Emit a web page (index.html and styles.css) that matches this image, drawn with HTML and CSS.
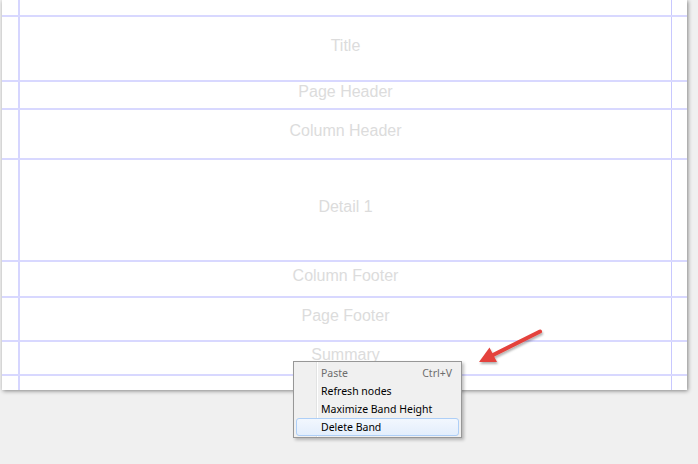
FILE: index.html
```html
<!DOCTYPE html>
<html>
<head>
<meta charset="utf-8">
<link rel="stylesheet" href="styles.css">
</head>
<body>
<div class="workspace">
  <div class="page">
    <div class="band b0"></div>
    <div class="band b-title"><span>Title</span></div>
    <div class="band b-ph"><span>Page Header</span></div>
    <div class="band b-ch"><span>Column Header</span></div>
    <div class="band b-detail"><span>Detail 1</span></div>
    <div class="band b-cf"><span>Column Footer</span></div>
    <div class="band b-pf"><span>Page Footer</span></div>
    <div class="band b-sum"><span>Summary</span></div>
    <div class="band b-last"></div>
  </div>

  <div class="menu">
    <div class="item disabled"><span class="label">Paste</span><span class="key">Ctrl+V</span></div>
    <div class="item"><span class="label">Refresh nodes</span></div>
    <div class="item"><span class="label">Maximize Band Height</span></div>
    <div class="item hover"><span class="label">Delete Band</span></div>
  </div>

  <svg class="arrow" width="80" height="50" viewBox="470 322 80 50">
    <defs>
      <filter id="sh" x="-20%" y="-20%" width="140%" height="160%">
        <feDropShadow dx="1" dy="2" stdDeviation="1.2" flood-color="#000" flood-opacity="0.3"/>
      </filter>
    </defs>
    <g filter="url(#sh)">
      <line x1="540" y1="331.5" x2="492" y2="355.5" stroke="#e4423c" stroke-width="4" stroke-linecap="round"/>
      <polygon points="479,362 489.5,347.5 497,362" fill="#e4423c"/>
    </g>
  </svg>
</div>
</body>
</html>
```

FILE: styles.css
```css
html, body {
  margin: 0;
  padding: 0;
}
body {
  background: #f0f0f0;
  width: 698px;
  height: 464px;
  overflow: hidden;
}
.workspace {
  position: relative;
  width: 698px;
  height: 464px;
}
.page {
  margin-left: 2px;
  width: 685px;
  height: 390px;
  background-color: #fff;
  background-image:
    linear-gradient(to right,
      transparent 16px, #d6d6ff 16px, #d6d6ff 18px, transparent 18px,
      transparent 669px, #c8c8ff 669px, #c8c8ff 670px, transparent 670px);
  box-shadow: 1px 1px 4px rgba(0, 0, 0, 0.45);
  display: flex;
  flex-direction: column;
}
.band {
  box-sizing: border-box;
  border-bottom: 2px solid #d8d8ff;
  display: flex;
  align-items: center;
  justify-content: center;
  padding-left: 2px;
  padding-bottom: 6px;
  font-family: "Liberation Sans", Arial, sans-serif;
  font-size: 16px;
  color: #dcdcdc;
  flex: none;
}
.b0 { height: 17px; padding: 0; }
.b-title { height: 65px; }
.b-ph { height: 28px; }
.b-ch { height: 50px; }
.b-detail { height: 102px; }
.b-cf { height: 36px; }
.b-pf { height: 44px; }
.b-sum { height: 34px; }
.b-last { height: 14px; border-bottom: none; padding: 0; }

.menu {
  position: absolute;
  left: 293px;
  top: 361px;
  width: 169px;
  box-sizing: border-box;
  border: 1px solid #979797;
  background-color: #f0f0f0;
  background-image: linear-gradient(to right,
    transparent 22px, #e2e3e3 22px, #e2e3e3 23px, #ffffff 23px, #ffffff 24px, transparent 24px);
  padding: 2px 2px 1px 2px;
  box-shadow: 2px 2px 3px rgba(0, 0, 0, 0.25);
  font-family: "Noto Sans", "Liberation Sans", sans-serif;
  font-size: 10.5px;
  color: #000;
}
.item {
  height: 18px;
  display: flex;
  align-items: center;
  padding-left: 24px;
  padding-right: 6px;
  box-sizing: border-box;
  border: 1px solid transparent;
  border-radius: 3px;
}
.item .label { flex: 1; }
.item .key { color: #6d6d6d; }
.item.disabled .label { color: #6d6d6d; }
.item.hover {
  border-color: #aecff7;
  background: linear-gradient(to bottom, #f2f7fe, #e3eefc);
}
.arrow {
  position: absolute;
  left: 470px;
  top: 322px;
}
```
